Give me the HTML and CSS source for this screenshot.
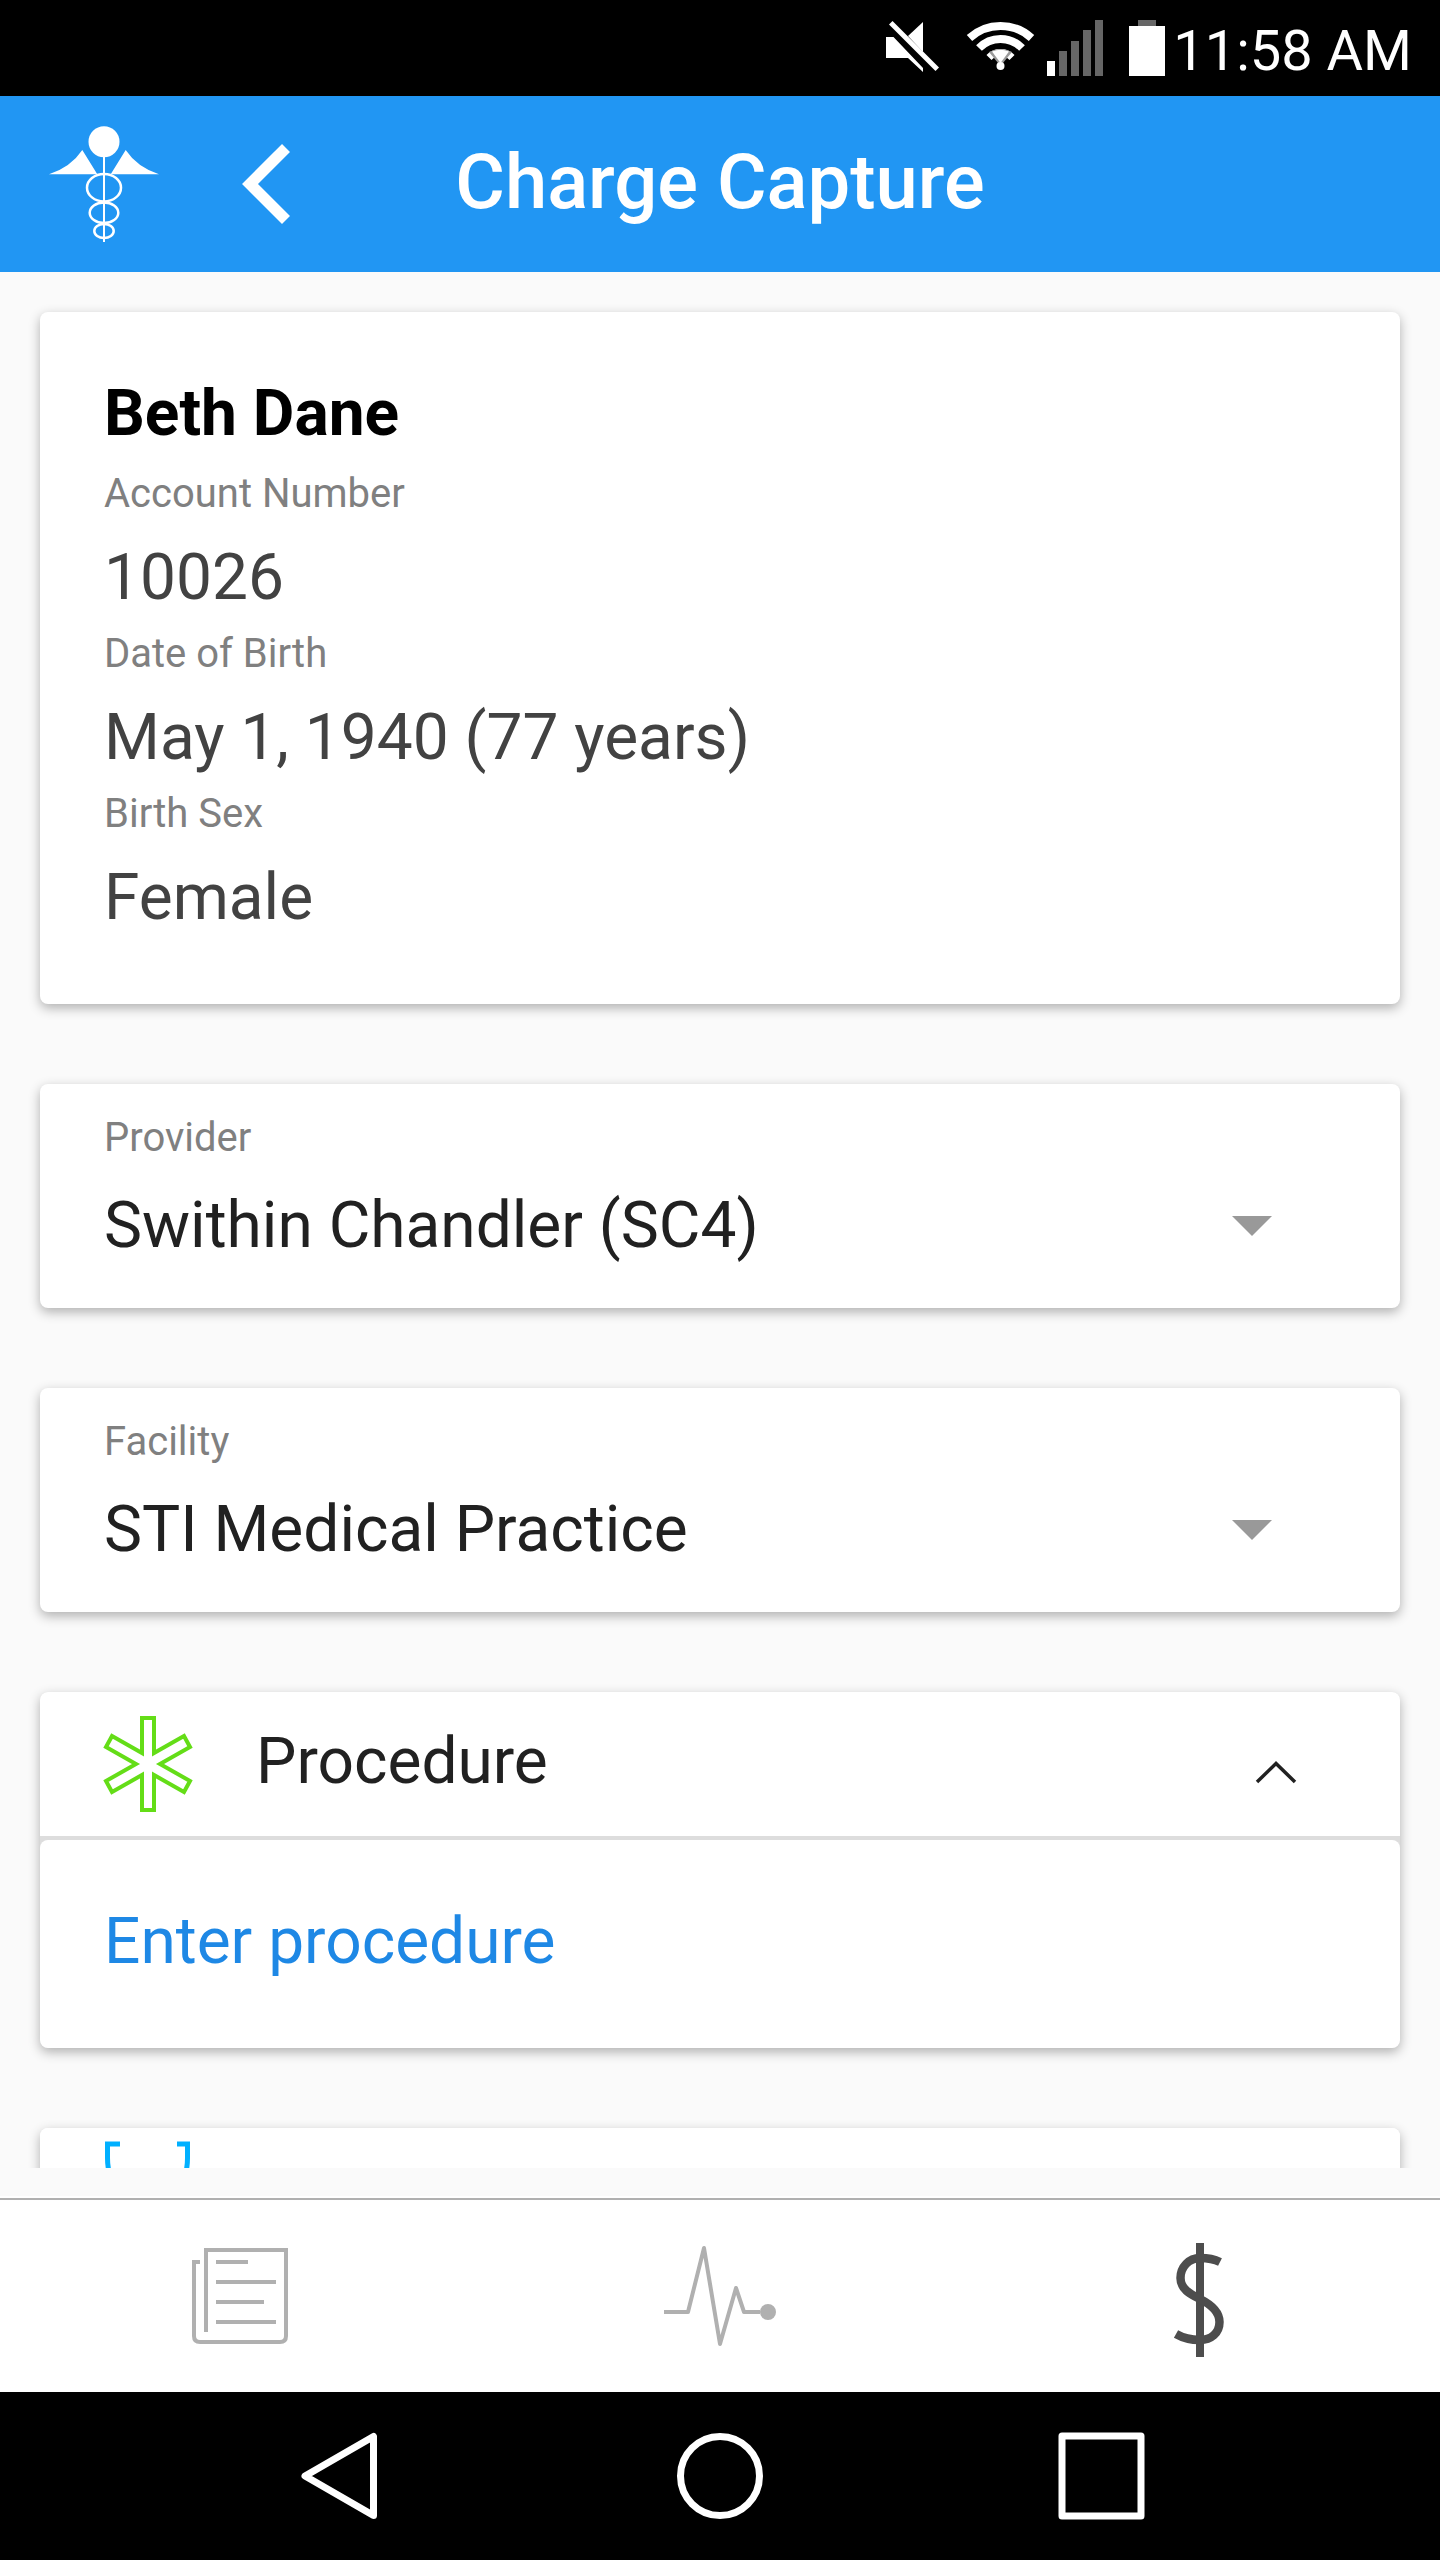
FILE: index.html
```html
<!DOCTYPE html>
<html lang="en">
<head>
    <meta charset="UTF-8">
    <meta name="viewport" content="width=device-width, initial-scale=1.0">
    <title>Charge Capture</title>
    <link rel="stylesheet" href="styles.css">
</head>
<body>
    <div class="status-bar">
        <svg class="status-mute" width="60" height="60" viewBox="0 0 60 60" fill="#fff">
            <path d="M5 21H12.5L42 52V56L27 42H5Z"/>
            <path d="M42 6V36L27 20Z"/>
            <path d="M11.5 5L58 51.5L54.5 55L8 8.5Z"/>
        </svg>
        <svg class="status-wifi" width="80" height="60" viewBox="0 0 80 60" fill="none" stroke="#fff">
            <path d="M8.5 22A46 46 0 0 1 70.5 22" stroke-width="8"/>
            <path d="M18 32A30 30 0 0 1 61 32" stroke-width="8"/>
            <path d="M28 41.5A16 16 0 0 1 51 41.5" stroke-width="7"/>
            <path d="M28 36L39.5 50L51 36Q39.5 30 28 36Z" fill="#999" stroke="none"/>
            <path d="M31 35.5L39.5 47L48 35.5Q39.5 32 31 35.5Z" fill="#fff" stroke="none"/>
            <circle cx="39.5" cy="50" r="4" fill="#fff" stroke="none"/>
        </svg>
        <svg class="status-signal" width="56" height="60" viewBox="0 0 56 60" fill="#666">
            <rect x="0" y="45" width="8" height="15" fill="#fff"/>
            <rect x="12" y="35" width="8" height="25"/>
            <rect x="24" y="25" width="8" height="35"/>
            <rect x="36" y="14" width="8" height="46"/>
            <rect x="48" y="4" width="8" height="56"/>
        </svg>
        <svg class="status-battery" width="36" height="60" viewBox="0 0 36 60">
            <rect x="9" y="4" width="18" height="6" fill="#666"/>
            <rect x="0" y="10" width="36" height="50" fill="#fff"/>
        </svg>
        <span class="time">11:58 AM</span>
    </div>

    <header class="app-bar">
        <div class="app-bar-left">
            <svg width="112" height="128" viewBox="0 0 112 128" fill="none" stroke="#fff" stroke-width="2.5">
                <circle cx="56" cy="21.7" r="15.5" fill="#fff" stroke="none"/>
                <path d="M1 54.3Q23 47 34.3 30L49.3 54.3Z" fill="#fff" stroke="none"/>
                <path d="M111 54.3Q89 47 77.7 30L62.7 54.3Z" fill="#fff" stroke="none"/>
                <path d="M56 36V122" stroke-width="2"/>
                <ellipse cx="56" cy="67.7" rx="17" ry="13.7"/>
                <ellipse cx="56" cy="92.7" rx="14.3" ry="10.3"/>
                <ellipse cx="56" cy="111" rx="9.7" ry="7"/>
            </svg>
            <button class="back" aria-label="Back">
                <svg width="96" height="96" viewBox="0 0 96 96" fill="none" stroke="#fff" stroke-width="11.3">
                    <path d="M66 12L30 48L66 84"/>
                </svg>
            </button>
        </div>
        <h1>Charge Capture</h1>
    </header>

    <main class="content">
        <section class="card patient">
            <h2>Beth Dane</h2>
            <dl>
                <dt>Account Number</dt>
                <dd>10026</dd>
                <dt>Date of Birth</dt>
                <dd>May 1, 1940 (77 years)</dd>
                <dt>Birth Sex</dt>
                <dd>Female</dd>
            </dl>
        </section>

        <section class="card field">
            <label for="provider">Provider</label>
            <div class="select-row">
                <select id="provider">
                    <option>Swithin Chandler (SC4)</option>
                </select>
                <span class="caret"></span>
            </div>
        </section>

        <section class="card field">
            <label for="facility">Facility</label>
            <div class="select-row">
                <select id="facility">
                    <option>STI Medical Practice</option>
                </select>
                <span class="caret"></span>
            </div>
        </section>

        <section class="card expanded">
            <button class="card-header">
                <svg width="96" height="96" viewBox="0 0 96 96" fill="none" stroke="#64dd17" stroke-width="4">
                    <path d="M42 2H54V37L84 20L90 31L60 48L90 65L84 76L54 59V94H42V59L12 76L6 65L36 48L6 31L12 20L42 37Z"/>
                </svg>
                <span class="card-title">Procedure</span>
                <svg width="48" height="48" viewBox="0 0 48 48" fill="none" stroke="#212121" stroke-width="3.5">
                    <path d="M5 42L24 23.5L43 42"/>
                </svg>
            </button>
            <div class="card-body">
                <a href="#">Enter procedure</a>
            </div>
        </section>

        <section class="card">
            <button class="card-header" aria-label="Expand">
                <svg width="96" height="120" viewBox="0 0 96 120" fill="none" stroke="#00b0ff" stroke-width="5">
                    <path d="M20 4H7.5V18Q7.5 50 36 60"/>
                    <path d="M77 4H87.5V18Q87.5 50 60 60"/>
                </svg>
            </button>
        </section>
    </main>

    <nav class="tab-bar">
        <button aria-label="Notes">
            <svg width="96" height="96" viewBox="0 0 96 96" fill="none" stroke="#b0b0b0" stroke-width="4">
                <path d="M8 14H2V88Q2 94 8 94H88Q94 94 94 88V2H14V84"/>
                <path d="M24 14H56M24 34H84M24 54H72M24 74H84"/>
            </svg>
        </button>
        <button aria-label="Vitals">
            <svg width="112" height="112" viewBox="0 0 112 112" fill="none" stroke="#b0b0b0" stroke-width="4" stroke-linejoin="round">
                <path d="M0 72H24L40 8L56 104L72 48L80 72H96"/>
                <circle cx="104" cy="72" r="8" fill="#b0b0b0" stroke="none"/>
            </svg>
        </button>
        <button aria-label="Charges">
            <svg width="112" height="128" viewBox="0 0 112 128" fill="none" stroke="#4d4d4d" stroke-width="8">
                <path d="M56 11V125"/>
                <path d="M76 30C70 27 63 26 56 26C45 26 36.5 35 36.5 46C36.5 57 46 62 56 67C66 72 75.5 79 75.5 90C75.5 101 67 108 56 108C47 108 39 106 32 102" stroke-width="8.5"/>
            </svg>
        </button>
    </nav>

    <div class="nav-bar">
        <button aria-label="System back">
            <svg width="88" height="88" viewBox="0 0 88 88" fill="none" stroke="#fff" stroke-width="7" stroke-linejoin="round">
                <path d="M79.5 4.5V83.5L11 44Z"/>
            </svg>
        </button>
        <button aria-label="Home">
            <svg width="88" height="88" viewBox="0 0 88 88" fill="none" stroke="#fff" stroke-width="7">
                <circle cx="44" cy="44" r="39.5"/>
            </svg>
        </button>
        <button aria-label="Recent apps">
            <svg width="88" height="88" viewBox="0 0 88 88" fill="none" stroke="#fff" stroke-width="7" stroke-linejoin="round">
                <rect x="4" y="4" width="79" height="80"/>
            </svg>
        </button>
    </div>
</body>
</html>
```
FILE: styles.css
```css
* {
    box-sizing: border-box;
}
body {
    display: flex;
    flex-direction: column;
    height: 100vh;
    margin: 0;
    background-color: #fafafa;
    color: #212121;
    font-family: Roboto, sans-serif;
    font-size: 64px;
    line-height: 84px;
}
button {
    padding: 0;
    border: none;
    background: none;
    color: inherit;
    font: inherit;
    cursor: pointer;
}
svg {
    display: block;
    flex: none;
}

/* phone status bar */
.status-bar {
    display: flex;
    align-items: center;
    justify-content: flex-end;
    height: 96px;
    padding: 0 28px 4px;
    background-color: #000;
    color: #fff;
    font-size: 56px;
}
.status-mute {
    margin-right: 20px;
}
.status-wifi {
    margin-right: 6px;
}
.status-signal {
    margin-right: 26px;
}
.status-battery {
    margin-right: 8px;
}
.time {
    padding-top: 10px;
}

/* app header */
.app-bar {
    display: grid;
    grid-template-columns: 1fr auto 1fr;
    align-items: center;
    height: 176px;
    padding: 0 48px;
    background-color: #2196f3;
    color: #fff;
}
.app-bar-left {
    display: flex;
    align-items: center;
    gap: 60px;
}
.app-bar h1 {
    margin: 0;
    padding-bottom: 4px;
    font-size: 76px;
    font-weight: 500;
}

/* cards */
.content {
    display: flex;
    flex: 1 1 0;
    flex-direction: column;
    gap: 80px;
    min-height: 0;
    margin-bottom: 28px;
    padding: 40px;
    overflow-y: auto;
    scrollbar-width: none;
}
.card {
    flex: none;
    border-radius: 8px;
    background-color: #fff;
    box-shadow: 0 4px 12px rgba(0, 0, 0, 0.3);
}
.patient {
    padding: 60px 64px 64px;
}
.patient h2 {
    margin: 0 0 4px;
    color: #000;
    font-size: 64px;
    font-weight: 700;
}
.patient dl {
    margin: 0;
}
.patient dt,
.field label {
    display: block;
    color: #808080;
    font-size: 40px;
    line-height: 68px;
}
.patient dd {
    margin: 8px 0 0;
    color: #424242;
}
.field {
    padding: 20px 64px 40px;
}
.select-row {
    display: flex;
    align-items: center;
    margin-top: 12px;
    padding-right: 64px;
}
.select-row select {
    flex: 1;
    height: 84px;
    padding: 0;
    border: none;
    background: none;
    color: #212121;
    font: inherit;
    appearance: none;
}
.caret {
    border-top: 20px solid #999;
    border-right: 20px solid transparent;
    border-left: 20px solid transparent;
}
.expanded {
    background-color: #ddd;
}
.card-header {
    display: flex;
    align-items: center;
    gap: 60px;
    width: 100%;
    height: 144px;
    padding: 0 100px 0 60px;
    border-radius: 8px 8px 0 0;
    background-color: #fff;
    text-align: left;
}
.card-title {
    flex: 1;
    padding-bottom: 4px;
}
.card-body {
    margin-top: 4px;
    padding: 60px 64px 64px;
    border-radius: 8px;
    background-color: #fff;
}
.card-body a {
    color: #1e88e5;
    text-decoration: none;
}

/* bottom tabs */
.tab-bar {
    display: grid;
    grid-template-columns: repeat(3, 1fr);
    height: 196px;
    padding-top: 2px;
    border-top: 2px solid #fff;
    background-color: #fff;
    box-shadow: inset 0 2px #b0b0b0;
}
.tab-bar button {
    display: flex;
    align-items: center;
    justify-content: center;
}

/* phone navigation bar */
.nav-bar {
    display: flex;
    align-items: center;
    justify-content: space-evenly;
    height: 168px;
    background-color: #000;
}
```
